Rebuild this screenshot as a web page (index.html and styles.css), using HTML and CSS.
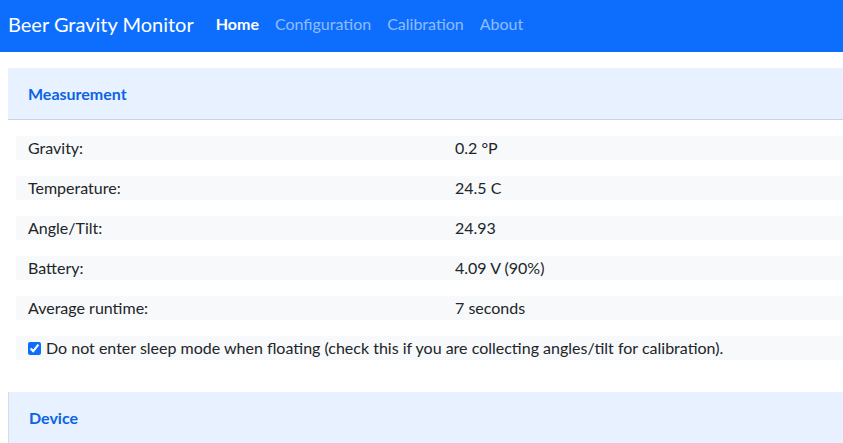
FILE: index.html
```html
<!DOCTYPE html>
<html lang="en">
<head>
    <meta charset="UTF-8">
    <title>Beer Gravity Monitor</title>
    <link rel="stylesheet" href="styles.css">
</head>

<body>
    <nav class="navbar">
        <span class="brand">Beer Gravity Monitor</span>
        <a class="nav-link active" href="#">Home</a>
        <a class="nav-link" href="#">Configuration</a>
        <a class="nav-link" href="#">Calibration</a>
        <a class="nav-link" href="#">About</a>
    </nav>

    <div id="main">
        <div class="section">
            <div class="section-header">Measurement</div>
            <div class="section-body">
                <div class="row"><span>Gravity:</span><span>0.2 °P</span></div>
                <div class="row"><span>Temperature:</span><span>24.5 C</span></div>
                <div class="row"><span>Angle/Tilt:</span><span>24.93</span></div>
                <div class="row"><span>Battery:</span><span>4.09 V (90%)</span></div>
                <div class="row"><span>Average runtime:</span><span>7 seconds</span></div>
                <div class="row check">
                    <label><input type="checkbox" checked>Do not enter sleep mode when floating (check this if you are collecting angles/tilt for calibration).</label>
                </div>
            </div>
        </div>
        <div class="section device">
            <div class="section-header">Device</div>
        </div>
    </div>
</body>
</html>
```

FILE: styles.css
```css
html{
    overflow: hidden;
}
body{
    margin: 0;
    font-family: Lato, "Liberation Sans", sans-serif;
    font-size: 16px;
    color: #212529;
}
.navbar{
    height: 47px;
    padding-bottom: 5px;
    background: #0d6efd;
    display: flex;
    align-items: center;
    padding-left: 8px;
    .brand{
        font-size: 20px;
        color: #fff;
        margin-right: 14px;
    }
    .nav-link{
        padding: 0 8px;
        color: rgba(255, 255, 255, .55);
        text-decoration: none;
    }
    .active{
        color: #fff;
        font-weight: bold;
    }
}
#main{
    padding: 16px 0 16px 8px;
}
.section{
    margin-bottom: 16px;
    .section-header{
        background: #e7f1ff;
        color: #0c63e4;
        font-weight: bold;
        line-height: 19px;
        padding: 16px 20px;
        border-bottom: 1px solid #c9d5e6;
    }
    .section-body{
        padding: 16px 0 16px 8px;
        display: flex;
        flex-direction: column;
        gap: 16px;
    }
}
.device .section-header{
    border-left: 1px solid #d6dde6;
}
.row{
    display: grid;
    grid-template-columns: 427px 1fr;
    background: #f8f9fa;
    line-height: 24px;
    span{
        padding-left: 12px;
    }
}
.check{
    display: block;
    padding-left: 12px;
    label{
        display: flex;
        align-items: center;
    }
    input{
        margin: 0 5px 0 0;
        width: 13px;
        height: 13px;
        accent-color: #0d6efd;
    }
}
```
